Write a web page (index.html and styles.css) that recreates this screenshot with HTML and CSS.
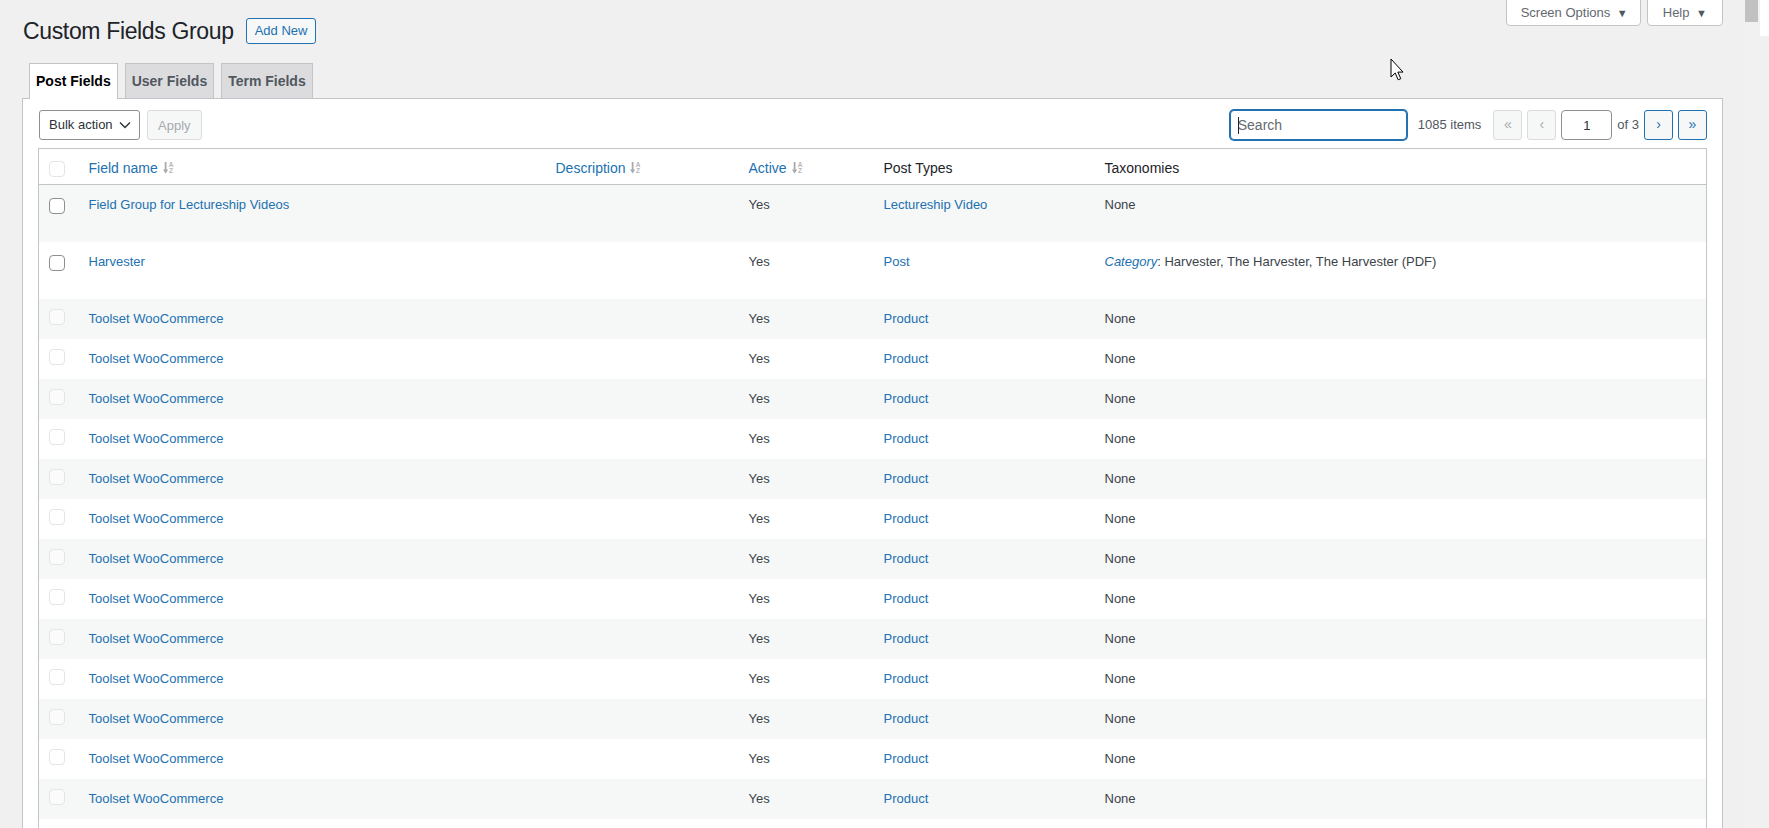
FILE: index.html
```html
<!DOCTYPE html>
<html lang="en">
<head>
    <meta charset="UTF-8">
    <meta name="viewport" content="width=device-width, initial-scale=1.0">
    <title>Custom Fields Group</title>
    <link rel="stylesheet" href="styles.css">
</head>
<body>
    <div class="wrap">
        <div class="top-bar">
            <div class="title-row">
                <h1>Custom Fields Group</h1>
                <a class="page-title-action" href="#">Add New</a>
            </div>
            <div class="screen-meta-links">
                <button class="screen-meta-toggle">Screen Options <span class="caret">&#9660;</span></button>
                <button class="screen-meta-toggle">Help <span class="caret">&#9660;</span></button>
            </div>
        </div>

        <nav class="nav-tab-wrapper">
            <a class="nav-tab active" href="#">Post Fields</a>
            <a class="nav-tab" href="#">User Fields</a>
            <a class="nav-tab" href="#">Term Fields</a>
        </nav>

        <div class="panel">
            <div class="tablenav">
                <div class="bulkactions">
                    <div class="bulk-select">
                        <span>Bulk action</span>
                        <svg width="12" height="8" viewBox="0 0 12 8"><path d="M1 1.5l5 5 5-5" fill="none" stroke="#2c3338" stroke-width="1.4"/></svg>
                    </div>
                    <button class="button" disabled>Apply</button>
                </div>
                <div class="tablenav-right">
                    <div class="search-box">
                        <span class="text-caret"></span>
                        <input class="search-input" type="search" placeholder="Search">
                    </div>
                    <span class="displaying-num">1085 items</span>
                    <span class="pagination-links">
                        <span class="page-btn disabled">&laquo;</span>
                        <span class="page-btn disabled">&lsaquo;</span>
                        <input class="current-page" type="text" value="1">
                        <span class="total-pages">of 3</span>
                        <a class="page-btn" href="#">&rsaquo;</a>
                        <a class="page-btn" href="#">&raquo;</a>
                    </span>
                </div>
            </div>

            <table class="fields-table">
                <colgroup>
                    <col class="col-cb">
                    <col class="col-name">
                    <col class="col-desc">
                    <col class="col-active">
                    <col class="col-types">
                    <col>
                </colgroup>
                <thead>
                    <tr>
                        <td class="check-column"><input class="cb faint" type="checkbox"></td>
                        <th><a href="#">Field name</a> <svg class="sort-icon" width="11" height="13" viewBox="0 0 11 13"><path d="M2.6 1v8.5" stroke="#a7aaad" stroke-width="1.8"/><path d="M0 8.4h5.2L2.6 12.4z" fill="#a7aaad"/><text x="8" y="5.6" font-size="6.5" font-weight="bold" text-anchor="middle" fill="#b4b6b9" font-family="Liberation Sans, sans-serif">A</text><text x="8" y="12.4" font-size="6.5" font-weight="bold" text-anchor="middle" fill="#b4b6b9" font-family="Liberation Sans, sans-serif">Z</text></svg></th>
                        <th><a href="#">Description</a> <svg class="sort-icon" width="11" height="13" viewBox="0 0 11 13"><path d="M2.6 1v8.5" stroke="#a7aaad" stroke-width="1.8"/><path d="M0 8.4h5.2L2.6 12.4z" fill="#a7aaad"/><text x="8" y="5.6" font-size="6.5" font-weight="bold" text-anchor="middle" fill="#b4b6b9" font-family="Liberation Sans, sans-serif">A</text><text x="8" y="12.4" font-size="6.5" font-weight="bold" text-anchor="middle" fill="#b4b6b9" font-family="Liberation Sans, sans-serif">Z</text></svg></th>
                        <th><a href="#">Active</a> <svg class="sort-icon" width="11" height="13" viewBox="0 0 11 13"><path d="M2.6 1v8.5" stroke="#a7aaad" stroke-width="1.8"/><path d="M0 8.4h5.2L2.6 12.4z" fill="#a7aaad"/><text x="8" y="5.6" font-size="6.5" font-weight="bold" text-anchor="middle" fill="#b4b6b9" font-family="Liberation Sans, sans-serif">A</text><text x="8" y="12.4" font-size="6.5" font-weight="bold" text-anchor="middle" fill="#b4b6b9" font-family="Liberation Sans, sans-serif">Z</text></svg></th>
                        <th>Post Types</th>
                        <th>Taxonomies</th>
                    </tr>
                </thead>
                <tbody>
                    <tr class="tall">
                        <th class="check-column"><input class="cb" type="checkbox"></th>
                        <td><a href="#">Field Group for Lectureship Videos</a><div class="row-actions">Edit | Deactivate | Delete</div></td>
                        <td></td>
                        <td>Yes</td>
                        <td><a href="#">Lectureship Video</a></td>
                        <td>None</td>
                    </tr>
                    <tr class="tall">
                        <th class="check-column"><input class="cb" type="checkbox"></th>
                        <td><a href="#">Harvester</a><div class="row-actions">Edit | Deactivate | Delete</div></td>
                        <td></td>
                        <td>Yes</td>
                        <td><a href="#">Post</a></td>
                        <td><em class="tax-name">Category</em>: Harvester, The Harvester, The Harvester (PDF)</td>
                    </tr>
                    <tr><th class="check-column"><input class="cb faint" type="checkbox" disabled></th><td><a href="#">Toolset WooCommerce</a></td><td></td><td>Yes</td><td><a href="#">Product</a></td><td>None</td></tr>
                    <tr><th class="check-column"><input class="cb faint" type="checkbox" disabled></th><td><a href="#">Toolset WooCommerce</a></td><td></td><td>Yes</td><td><a href="#">Product</a></td><td>None</td></tr>
                    <tr><th class="check-column"><input class="cb faint" type="checkbox" disabled></th><td><a href="#">Toolset WooCommerce</a></td><td></td><td>Yes</td><td><a href="#">Product</a></td><td>None</td></tr>
                    <tr><th class="check-column"><input class="cb faint" type="checkbox" disabled></th><td><a href="#">Toolset WooCommerce</a></td><td></td><td>Yes</td><td><a href="#">Product</a></td><td>None</td></tr>
                    <tr><th class="check-column"><input class="cb faint" type="checkbox" disabled></th><td><a href="#">Toolset WooCommerce</a></td><td></td><td>Yes</td><td><a href="#">Product</a></td><td>None</td></tr>
                    <tr><th class="check-column"><input class="cb faint" type="checkbox" disabled></th><td><a href="#">Toolset WooCommerce</a></td><td></td><td>Yes</td><td><a href="#">Product</a></td><td>None</td></tr>
                    <tr><th class="check-column"><input class="cb faint" type="checkbox" disabled></th><td><a href="#">Toolset WooCommerce</a></td><td></td><td>Yes</td><td><a href="#">Product</a></td><td>None</td></tr>
                    <tr><th class="check-column"><input class="cb faint" type="checkbox" disabled></th><td><a href="#">Toolset WooCommerce</a></td><td></td><td>Yes</td><td><a href="#">Product</a></td><td>None</td></tr>
                    <tr><th class="check-column"><input class="cb faint" type="checkbox" disabled></th><td><a href="#">Toolset WooCommerce</a></td><td></td><td>Yes</td><td><a href="#">Product</a></td><td>None</td></tr>
                    <tr><th class="check-column"><input class="cb faint" type="checkbox" disabled></th><td><a href="#">Toolset WooCommerce</a></td><td></td><td>Yes</td><td><a href="#">Product</a></td><td>None</td></tr>
                    <tr><th class="check-column"><input class="cb faint" type="checkbox" disabled></th><td><a href="#">Toolset WooCommerce</a></td><td></td><td>Yes</td><td><a href="#">Product</a></td><td>None</td></tr>
                    <tr><th class="check-column"><input class="cb faint" type="checkbox" disabled></th><td><a href="#">Toolset WooCommerce</a></td><td></td><td>Yes</td><td><a href="#">Product</a></td><td>None</td></tr>
                    <tr><th class="check-column"><input class="cb faint" type="checkbox" disabled></th><td><a href="#">Toolset WooCommerce</a></td><td></td><td>Yes</td><td><a href="#">Product</a></td><td>None</td></tr>
                    <tr class="last-row"><th class="check-column"></th><td></td><td></td><td></td><td></td><td></td></tr>
                </tbody>
            </table>
        </div>
    </div>

    <!-- browser chrome bits visible in the capture -->
    <div class="fake-scrollbar"><div class="fake-thumb"></div></div>
    <div class="edge-strip"></div>
    <svg class="mouse-cursor" width="14" height="23" viewBox="0 0 14 23"><path d="M1 1v18l4.2-4 3 6.8 2.6-1.1-3-6.6H13z" fill="#fff" stroke="#000" stroke-width="1" stroke-linejoin="round"/></svg>
</body>
</html>
```

FILE: styles.css
```css
html {
    overflow: hidden;
}

body {
    margin: 0;
    background-color: #f0f0f1;
    color: #3c434a;
    font-family: 'Liberation Sans', Arial, sans-serif;
    font-size: 13px;
    line-height: 1.4;
}

a {
    color: #2271b1;
    text-decoration: none;
}

.wrap {
    padding: 0 46px 0 22px;
}

/* header */
.top-bar {
    display: flex;
    justify-content: space-between;
    align-items: flex-start;
}

.title-row {
    display: flex;
    align-items: center;
    margin-top: 16px;
    height: 30px;
}

h1 {
    margin: 0 0 0 1px;
    font-size: 23px;
    font-weight: 400;
    letter-spacing: -0.35px;
    line-height: 30px;
    color: #1d2327;
}

.page-title-action {
    margin-left: 12px;
    padding: 0 8px;
    line-height: 24px;
    border: 1px solid #2271b1;
    border-radius: 3px;
    background-color: #f6f7f7;
    font-size: 13px;
}

.screen-meta-links {
    display: flex;
    gap: 6px;
}

.screen-meta-toggle {
    height: 27px;
    margin-top: -1px;
    padding: 0 15px;
    border: 1px solid #c3c4c7;
    border-radius: 0 0 4px 4px;
    background-color: #fff;
    color: #646970;
    font-family: inherit;
    font-size: 13px;
}

.screen-meta-toggle:first-child {
    padding: 0 12px 0 14px;
}

.screen-meta-toggle .caret {
    margin-left: 3px;
    font-size: 11px;
    color: #50575e;
}

/* tabs */
.nav-tab-wrapper {
    display: flex;
    align-items: flex-end;
    gap: 7px;
    margin-top: 17px;
    padding-left: 7px;
}

.nav-tab {
    padding: 5px 6px;
    line-height: 24px;
    border: 1px solid #c3c4c7;
    border-bottom: none;
    background-color: #dcdcde;
    color: #50575e;
    font-size: 14px;
    font-weight: 600;
}

.nav-tab.active {
    position: relative;
    z-index: 1;
    margin-bottom: -1px;
    padding-bottom: 6px;
    background-color: #fff;
    color: #000;
}

/* panel */
.panel {
    background-color: #fff;
    border: 1px solid #c3c4c7;
    padding: 11px 15px 0;
}

.tablenav {
    display: flex;
    justify-content: space-between;
    align-items: center;
    height: 30px;
    margin-bottom: 8px;
}

.bulkactions {
    display: flex;
    gap: 7px;
    margin-left: 1px;
}

.bulk-select {
    display: flex;
    align-items: center;
    justify-content: space-between;
    box-sizing: border-box;
    width: 101px;
    height: 30px;
    padding: 0 8px 0 9px;
    border: 1px solid #8c8f94;
    border-radius: 3px;
    color: #2c3338;
    font-size: 13px;
}

.button {
    height: 30px;
    padding: 0 10px;
    border: 1px solid #dcdcde;
    border-radius: 3px;
    background-color: #f6f7f7;
    color: #a7aaad;
    font-family: inherit;
    font-size: 13px;
}

.tablenav-right {
    display: flex;
    align-items: center;
}

.search-box {
    position: relative;
}

.text-caret {
    position: absolute;
    left: 8px;
    top: 7px;
    width: 1px;
    height: 17px;
    background-color: #1d2327;
}

.search-input {
    box-sizing: border-box;
    width: 177px;
    height: 30px;
    padding: 0 7px;
    border: 1px solid #2271b1;
    border-radius: 4px;
    box-shadow: 0 0 0 1px #2271b1;
    font-family: inherit;
    font-size: 14px;
    outline: none;
}

.search-input::placeholder {
    color: #646970;
}

.displaying-num {
    margin: 0 12px 0 11px;
    color: #50575e;
}

.pagination-links {
    display: flex;
    align-items: center;
    gap: 5px;
}

.page-btn {
    box-sizing: border-box;
    width: 29px;
    height: 30px;
    line-height: 27px;
    text-align: center;
    border: 1px solid #2271b1;
    border-radius: 3px;
    background-color: #f6f7f7;
    color: #2271b1;
    font-size: 14px;
}

.page-btn.disabled {
    border-color: #dcdcde;
    color: #a7aaad;
}

.current-page {
    box-sizing: border-box;
    width: 51px;
    height: 30px;
    border: 1px solid #8c8f94;
    border-radius: 4px;
    text-align: center;
    color: #2c3338;
    font-family: inherit;
    font-size: 13px;
}

.total-pages {
    color: #50575e;
}

/* table */
.fields-table {
    width: 100%;
    table-layout: fixed;
    border-collapse: collapse;
    border: 1px solid #c3c4c7;
}

.col-cb { width: 40px; }
.col-name { width: 467px; }
.col-desc { width: 193px; }
.col-active { width: 135px; }
.col-types { width: 221px; }

.fields-table thead th,
.fields-table thead td {
    height: 19px;
    padding: 10px 10px 6px;
    border-bottom: 1px solid #c3c4c7;
    text-align: left;
    font-weight: 400;
    font-size: 14px;
    line-height: 19px;
    color: #1d2327;
    vertical-align: middle;
}

.sort-icon {
    vertical-align: -1px;
    margin-left: 1px;
}

.fields-table tbody td,
.fields-table tbody th {
    padding: 10px 10px;
    line-height: 20px;
    text-align: left;
    font-weight: 400;
    vertical-align: top;
}

.fields-table tbody tr:nth-child(odd) {
    background-color: #f6f7f7;
}

.fields-table .check-column {
    padding: 10px 0 0 10px;
    line-height: 0;
}

.fields-table thead .check-column {
    padding: 4px 0 0 10px;
}

.fields-table tr.tall .check-column {
    padding-top: 13px;
}

.fields-table tr.last-row td,
.fields-table tr.last-row th {
    height: 20px;
}

.row-actions {
    visibility: hidden;
    padding-top: 1px;
    font-size: 13px;
    line-height: 16px;
}

.tax-name {
    color: #2271b1;
}

.cb {
    appearance: none;
    box-sizing: border-box;
    width: 16px;
    height: 16px;
    margin: 0;
    border: 1px solid #8c8f94;
    border-radius: 4px;
    background-color: #fff;
}

.cb.faint {
    border-color: #e4e5e6;
    background-color: rgba(255, 255, 255, 0.5);
}

/* capture leftovers: scrollbar and pointer */
.fake-scrollbar {
    position: fixed;
    top: 0;
    right: 9px;
    width: 17px;
    height: 100%;
    background-color: #f1f1f1;
}

.fake-thumb {
    margin: 0 2px;
    height: 22px;
    background-color: #c1c1c1;
}

.edge-strip {
    position: fixed;
    top: 0;
    right: 0;
    width: 9px;
    height: 36px;
    background-color: #fff;
}

.mouse-cursor {
    position: fixed;
    left: 1390px;
    top: 58px;
}
```
